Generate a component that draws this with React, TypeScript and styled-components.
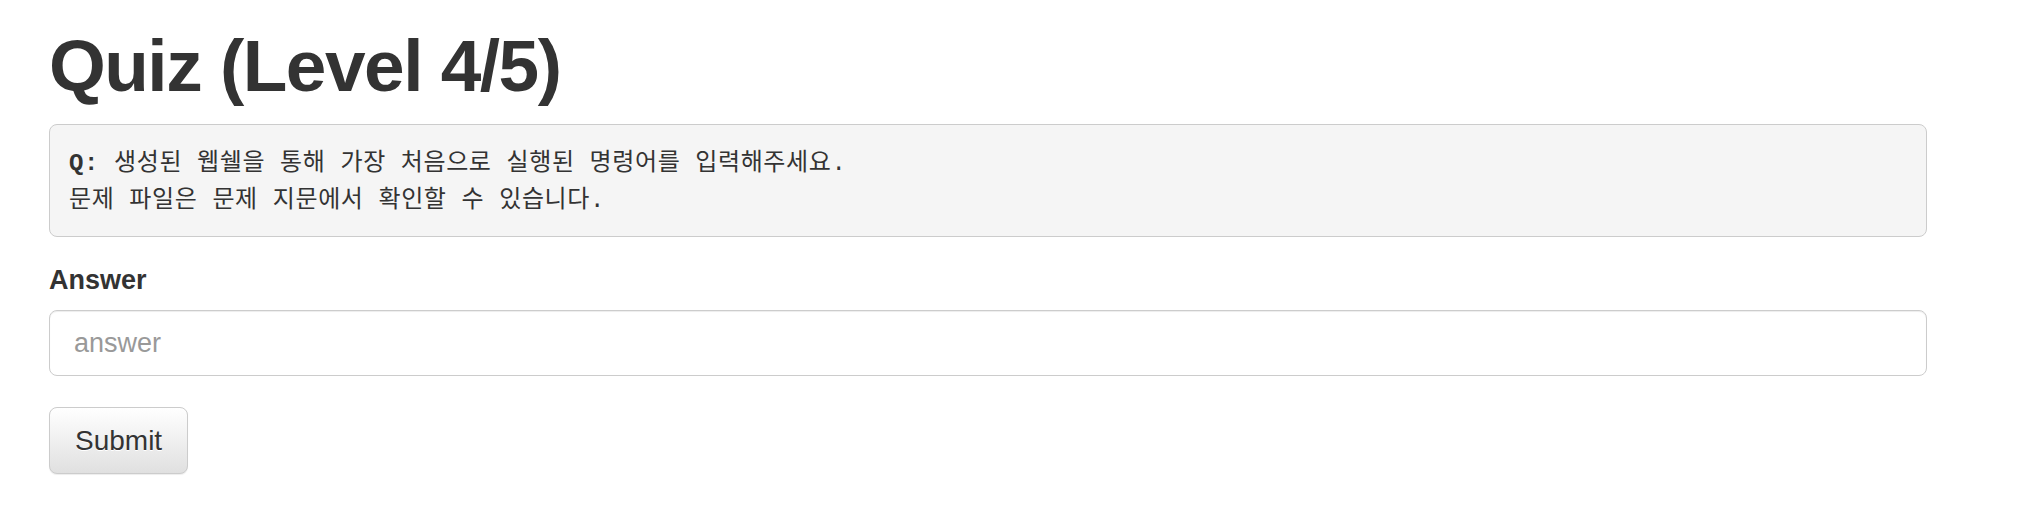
import styled, { createGlobalStyle } from 'styled-components';

const GlobalStyle = createGlobalStyle`
  * {
    box-sizing: border-box;
  }

  body {
    margin: 0;
    background: #fff;
    color: #333;
    font-family: "Liberation Sans", Arial, "Noto Sans CJK KR", sans-serif;
  }
`;

const Page = styled.div`
  padding: 26px 95px 40px 49px;
`;

const Title = styled.h1`
  margin: 0 0 18px;
  font-size: 73px;
  line-height: 80px;
  font-weight: 700;
  letter-spacing: -1.5px;
  color: #333;
`;

const Question = styled.pre`
  margin: 0 0 24px;
  padding: 20px 19px 17px;
  background: #f5f5f5;
  border: 1px solid #ccc;
  border-radius: 8px;
  color: #333;
  font-family: "Liberation Mono", "Noto Sans CJK KR", monospace;
  font-size: 24px;
  letter-spacing: 0.6px;
  white-space: pre-wrap;
`;

const Line = styled.span`
  display: block;
  height: 37px;
  line-height: 37px;
`;

const FormGroup = styled.div`
  margin-bottom: 31px;
`;

const Label = styled.label`
  display: inline-block;
  margin-bottom: 11px;
  font-size: 27px;
  line-height: 38px;
  font-weight: 700;
`;

const Input = styled.input`
  display: block;
  width: 100%;
  height: 66px;
  padding: 0 24px;
  border: 1px solid #ccc;
  border-radius: 8px;
  box-shadow: inset 0 1px 1px rgba(0, 0, 0, 0.075);
  font-family: "Liberation Sans", Arial, sans-serif;
  font-size: 27px;
  color: #555;
  outline: none;

  &::placeholder {
    color: #999;
  }
`;

const SubmitButton = styled.button`
  height: 67px;
  padding: 0 25px;
  border: 1px solid #ccc;
  border-radius: 8px;
  background-image: linear-gradient(to bottom, #fff 0, #e0e0e0 100%);
  box-shadow: inset 0 1px 0 rgba(255, 255, 255, 0.15), 0 1px 1px rgba(0, 0, 0, 0.075);
  text-shadow: 0 1px 0 #fff;
  font-family: "Liberation Sans", Arial, sans-serif;
  font-size: 28px;
  color: #333;
  cursor: pointer;
`;

export default function App() {
  return (
    <>
      <GlobalStyle />
      <Page>
        <Title>Quiz (Level 4/5)</Title>
        <Question>
          <Line>
            <strong>Q:</strong> 생성된 웹쉘을 통해 가장 처음으로 실행된 명령어를 입력해주세요.
          </Line>
          <Line>문제 파일은 문제 지문에서 확인할 수 있습니다.</Line>
        </Question>
        <form onSubmit={(e) => e.preventDefault()}>
          <FormGroup>
            <Label htmlFor="answer">Answer</Label>
            <Input id="answer" type="text" placeholder="answer" />
          </FormGroup>
          <SubmitButton type="submit">Submit</SubmitButton>
        </form>
      </Page>
    </>
  );
}
